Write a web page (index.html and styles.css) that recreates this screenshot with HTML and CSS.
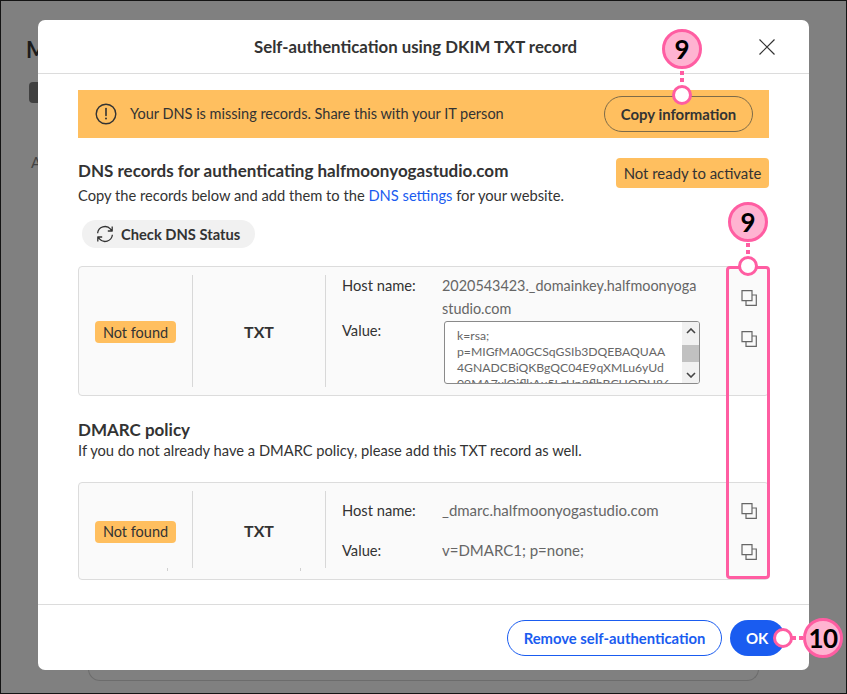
FILE: index.html
```html
<!DOCTYPE html>
<html lang="en">
<head>
<meta charset="utf-8">
<title>Self-authentication using DKIM TXT record</title>
<link rel="stylesheet" href="styles.css">
</head>
<body>
<div class="page">
  <div class="bg-title">M</div>
  <div class="bg-pill"></div>
  <div class="bg-label">A</div>
  <div class="bg-card"></div>
</div>

<section class="modal">
  <header class="modal-head">
    <h1>Self-authentication using DKIM TXT record</h1>
    <svg class="close" viewBox="0 0 16 16" width="16" height="16"><path d="M.5.5l15 15M15.5.5l-15 15" fill="none" stroke="#333" stroke-width="1.2"/></svg>
  </header>
  <div class="modal-body">
    <div class="banner">
      <svg class="warn" viewBox="0 0 22 22" width="22" height="22"><circle cx="11" cy="11" r="9.8" fill="none" stroke="#333" stroke-width="1.4"/><path d="M11 5.5v7" stroke="#333" stroke-width="1.6" stroke-linecap="round"/><circle cx="11" cy="15.6" r="1" fill="#333"/></svg>
      <span class="banner-text">Your DNS is missing records. Share this with your IT person</span>
      <button class="copy-info">Copy information</button>
    </div>

    <div class="dns-head">
      <div>
        <h2>DNS records for authenticating halfmoonyogastudio.com</h2>
        <p>Copy the records below and add them to the <a href="#">DNS settings</a> for your website.</p>
      </div>
      <span class="badge badge-large">Not ready to activate</span>
    </div>

    <button class="check">
      <svg viewBox="0 0 18 18" width="18" height="18"><path d="M1.6 8.2A7.4 7.4 0 0 1 14.6 4.2L16.2 6M16.2 1.4V6h-4.4M16.4 9.8A7.4 7.4 0 0 1 3.4 13.8L1.8 12M1.8 16.6V12h4.4" fill="none" stroke="#333" stroke-width="1.3" stroke-linejoin="round"/></svg>
      Check DNS Status
    </button>

    <div class="record record-one">
      <div class="cell cell-status"><span class="badge">Not found</span></div>
      <div class="cell cell-type">TXT</div>
      <div class="cell-detail">
        <div class="row row-host">
          <span class="label">Host name:</span>
          <span class="value">2020543423._domainkey.halfmoonyoga<wbr>studio.com</span>
        </div>
        <div class="row row-value">
          <span class="label">Value:</span>
          <div class="textbox">
            <div class="textbox-text">k=rsa;<br>p=MIGfMA0GCSqGSIb3DQEBAQUAA<br>4GNADCBiQKBgQC04E9qXMLu6yUd<br>09MA7xlOjflkAu5LzUn8flbBCHODU86</div>
            <div class="scrollbar">
              <svg viewBox="0 0 10 6" width="10" height="6"><path d="M1 5l4-4 4 4" fill="none" stroke="#444" stroke-width="1.6"/></svg>
              <span class="thumb"></span>
              <svg viewBox="0 0 10 6" width="10" height="6"><path d="M1 1l4 4 4-4" fill="none" stroke="#444" stroke-width="1.6"/></svg>
            </div>
          </div>
        </div>
      </div>
      <div class="copy-col copy-col-one">
        <svg class="copy" viewBox="0 0 16 16" width="16" height="16"><path d="M1 .7h10v10H1zM11 5h4.3v10.3H5V11" fill="none" stroke="#666" stroke-width="1.2"/></svg>
        <svg class="copy" viewBox="0 0 16 16" width="16" height="16"><path d="M1 .7h10v10H1zM11 5h4.3v10.3H5V11" fill="none" stroke="#666" stroke-width="1.2"/></svg>
      </div>
    </div>

    <div class="dmarc">
      <h2>DMARC policy</h2>
      <p>If you do not already have a DMARC policy, please add this TXT record as well.</p>
    </div>

    <div class="record record-two">
      <div class="cell cell-status"><span class="badge">Not found</span></div>
      <div class="cell cell-type">TXT</div>
      <div class="cell-detail detail-two">
        <div class="row"><span class="label">Host name:</span><span class="value">_dmarc.halfmoonyogastudio.com</span></div>
        <div class="row"><span class="label">Value:</span><span class="value">v=DMARC1; p=none;</span></div>
      </div>
      <div class="copy-col copy-col-two">
        <svg class="copy" viewBox="0 0 16 16" width="16" height="16"><path d="M1 .7h10v10H1zM11 5h4.3v10.3H5V11" fill="none" stroke="#666" stroke-width="1.2"/></svg>
        <svg class="copy" viewBox="0 0 16 16" width="16" height="16"><path d="M1 .7h10v10H1zM11 5h4.3v10.3H5V11" fill="none" stroke="#666" stroke-width="1.2"/></svg>
      </div>
    </div>
  </div>
  <footer class="modal-foot">
    <button class="btn-outline">Remove self-authentication</button>
    <button class="btn-solid">OK</button>
  </footer>
</section>

<div class="frame"></div>
<div class="callout c-one">9</div>
<div class="dash d-one"></div>
<div class="dot dot-one"></div>
<div class="callout c-two">9</div>
<div class="dash d-two"></div>
<div class="dot dot-two"></div>
<div class="callout c-three">10</div>
<div class="dash-h"></div>
<div class="dot dot-three"></div>
</body>
</html>
```
FILE: styles.css
```css
* { box-sizing: border-box; }
html, body { margin: 0; height: 694px; overflow: hidden; }
body { position: relative; font-family: "Lato", "Noto Sans", sans-serif; color: #333; background: #808080; }

.page { height: 694px; border: 1px solid #141414; padding: 37px 0 0 25px; background: #808080; position: relative; }
.bg-title { font-size: 22px; font-weight: 700; color: #1c1c1c; line-height: 24px; }
.bg-pill { width: 20px; height: 21px; margin: 20px 0 0 3px; background: #404040; border-radius: 4px; }
.bg-label { margin: 50px 0 0 5px; font-size: 15px; color: #444; line-height: 18px; }
.bg-card { position: absolute; left: 87px; right: 87px; bottom: 12px; height: 30px; border: 1px solid #6c6c6c; border-top: 0; border-radius: 0 0 12px 12px; }

.modal { position: absolute; left: 38px; top: 20px; width: 771px; height: 650px; background: #fff; border-radius: 7px; display: flex; flex-direction: column; }
.modal-head { height: 54px; flex: none; border-bottom: 1px solid #dcdcdc; display: flex; align-items: center; justify-content: center; position: relative; padding-right: 16px; }
.modal-head h1 { margin: 0; font-size: 16.8px; font-weight: 700; color: #333; }
.close { position: absolute; left: 721px; top: 19px; }

.modal-body { flex: 1; padding: 16px 40px 0; }
.banner { height: 48px; background: #ffbf5f; display: flex; align-items: center; padding: 0 16px 0 17px; }
.warn { flex: none; margin-right: 13px; }
.banner-text { flex: 1; font-size: 14.5px; line-height: 18px; padding-bottom: 1px; color: #333; }
.copy-info { width: 149px; height: 36px; border: 1px solid #7d6b49; border-radius: 18px; background: transparent; font: 700 14.9px "Lato", sans-serif; color: #333; padding: 0 0 1px; }

.dns-head { display: flex; justify-content: space-between; margin-top: 20px; height: 62px; }
h2 { margin: 0; font-size: 17px; font-weight: 700; line-height: 26px; color: #333; }
.dns-head p { margin: 2px 0 0; font-size: 14.7px; line-height: 18px; color: #333; }
.dmarc p { margin: -1px 0 0; font-size: 14.7px; line-height: 18px; color: #333; }
a { color: #1a5cf0; text-decoration: none; }
.badge { display: inline-flex; align-items: center; background: #ffbf5f; border-radius: 4px; height: 22px; padding: 0 8px; font-size: 14.5px; color: #333; }
.badge-large { height: 30px; width: 153px; justify-content: center; padding: 0 0 1px; font-size: 14.9px; }

.check { display: flex; align-items: center; gap: 7px; margin-left: 4px; width: 173px; height: 28px; padding: 0 0 1px 14px; border: 0; border-radius: 14px; background: #f1f1f1; font: 700 14.7px "Lato", sans-serif; color: #333; }

.record { position: relative; margin-top: 18px; display: grid; grid-template-columns: 114px 133px 1fr 44px; background: #fafafa; border: 1px solid #dcdcdc; border-radius: 4px; }
.record-one { height: 130px; }
.record-two { height: 98px; margin-top: 0; }
.cell { display: flex; align-items: center; justify-content: center; border-right: 1px solid #d8d8d8; margin: 8px 0; }
.cell-type { font-size: 16px; font-weight: 700; }
.record-one .cell-status { padding-top: 2px; }
.record-two .cell { margin-bottom: 11px; padding-top: 4px; }
.record-two .cell-type { padding-top: 2px; }
.record-two .cell-status::after, .record-two .cell-type::after { content: ""; position: absolute; top: 85px; width: 1px; height: 3px; background: #d0d0d0; }
.record-two .cell-status::after { left: 88px; }
.record-two .cell-type::after { left: 221px; }

.cell-detail { padding: 7px 0 0 16px; display: flex; flex-direction: column; }
.row { display: flex; }
.label { flex: none; width: 100px; font-size: 14.7px; line-height: 22px; color: #333; }
.value { font-size: 15px; line-height: 22px; color: #666; }
.row-host .value { width: 258px; font-size: 14.4px; line-height: 23px; }
.row-value .label { margin-top: -1px; }
.textbox { width: 256px; height: 63px; margin: 1px 0 0 2px; display: flex; background: #fff; border: 1px solid #8a8a8a; border-radius: 3px; overflow: hidden; }
.textbox-text { flex: 1; padding: 6px 0 0 12px; font-size: 12.2px; line-height: 16px; color: #666; white-space: nowrap; overflow: hidden; }
.scrollbar { flex: none; width: 17px; background: #f1f1f1; display: flex; flex-direction: column; align-items: center; justify-content: space-between; padding: 6px 0 5px; }
.thumb { align-self: stretch; height: 17px; background: #c1c1c1; }
.scrollbar svg { flex: none; }

.detail-two { padding-top: 16px; gap: 18px; }
.copy-col { display: flex; flex-direction: column; align-items: center; position: relative; left: 3px; }
.copy-col-one { padding-top: 23px; gap: 25px; }
.copy-col-two { padding-top: 20px; gap: 25px; }

.dmarc { height: 86px; padding-top: 22px; }
.dmarc h2 { line-height: 24px; }

.modal-foot { height: 66px; flex: none; border-top: 1px solid #dcdcdc; display: flex; justify-content: flex-end; align-items: flex-start; padding: 15px 24px 0 0; gap: 8px; }
.btn-outline { width: 215px; height: 36px; border: 1px solid #1a5cf0; border-radius: 18px; background: #fff; color: #1a5cf0; font: 700 14.8px "Lato", sans-serif; padding: 0; }
.btn-solid { width: 55px; height: 36px; border: 0; border-radius: 18px; background: #1a5cf0; color: #fff; font: 700 15px "Lato", sans-serif; padding: 0 0 0 16px; text-align: left; }

.frame { position: absolute; left: 726px; top: 266px; width: 44px; height: 313px; border: 3px solid #ff5da2; border-radius: 4px; }
.callout { position: absolute; width: 40px; height: 40px; border: 3px solid #ff5da2; border-radius: 50%; background: #ffb3d1; color: #000; font-size: 26px; font-weight: 700; display: flex; align-items: center; justify-content: center; }
.c-one { left: 662px; top: 29px; }
.c-two { left: 728px; top: 202px; }
.c-three { left: 803px; top: 618px; letter-spacing: -0.5px; }
.dot { position: absolute; width: 20px; height: 20px; border: 3px solid #ff5da2; border-radius: 50%; background: #fff; }
.dot-one { left: 672px; top: 85px; }
.dot-two { left: 738px; top: 256px; }
.dot-three { left: 773px; top: 628px; }
.dash { position: absolute; width: 4px; height: 14px; background: repeating-linear-gradient(#ff5da2 0 4px, transparent 4px 7px); }
.d-one { left: 680px; top: 71px; }
.d-two { left: 746px; top: 243px; }
.dash-h { position: absolute; left: 792px; top: 636px; width: 11px; height: 4px; background: repeating-linear-gradient(90deg, #ff5da2 0 4px, transparent 4px 7px); }
```
